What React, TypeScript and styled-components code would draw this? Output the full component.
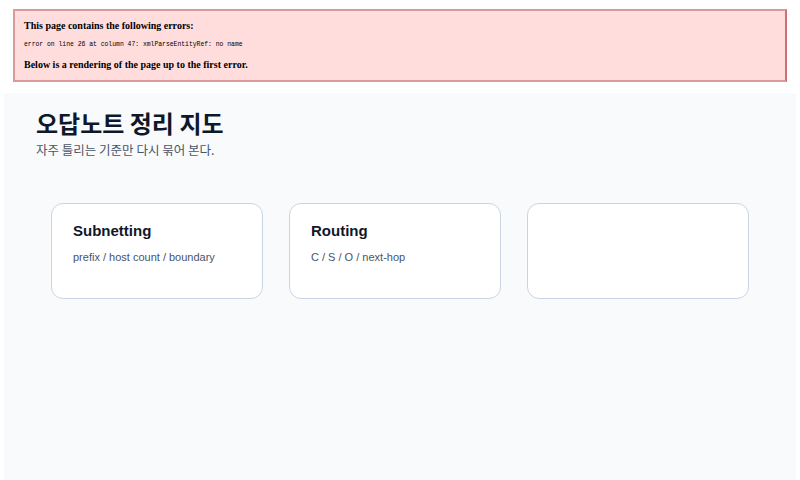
import React, { FC } from 'react';
import styled, { createGlobalStyle } from 'styled-components';

const GlobalStyle = createGlobalStyle`
  html, body {
    margin: 0;
    padding: 0;
    background: #ffffff;
  }
  body {
    width: 800px;
    height: 480px;
    overflow: hidden;
  }
`;

const Screen = styled.div`
  display: flex;
  flex-direction: column;
  height: 480px;
`;

const ParserError = styled.div`
  margin: 9px 13px 0 13px;
  padding: 0 9px;
  height: 73px;
  box-sizing: border-box;
  background: #ffdddd;
  border: 2px solid #d99a9a;
  border-right-color: #cc7070;
  color: #000;
  font-family: 'Liberation Serif', 'Times New Roman', serif;
`;

const ErrorHeading = styled.h3<{ $gap: number }>`
  margin: ${(p) => p.$gap}px 0 0 0;
  font-size: 10px;
  line-height: 12px;
  font-weight: bold;
`;

const ErrorDetail = styled.div`
  margin: 9px 0 0 0;
  font-family: 'Liberation Mono', 'Courier New', monospace;
  font-size: 6.4px;
  line-height: 8px;
`;

const Page = styled.main`
  flex: 1;
  margin: 11px 4px 0 4px;
  padding: 14px 32px 0 32px;
  background: #f8fafc;
  font-family: 'Liberation Sans', Arial, 'Noto Sans CJK KR', sans-serif;
`;

const Title = styled.h1`
  margin: 0;
  font-family: 'Noto Sans CJK KR', 'Noto Sans', sans-serif;
  font-size: 24px;
  line-height: 32px;
  font-weight: 700;
  color: #0f172a;
`;

const Subtitle = styled.p`
  margin: 2px 0 0 0;
  font-family: 'Noto Sans CJK KR', 'Noto Sans', sans-serif;
  font-size: 12.5px;
  line-height: 17px;
  color: #475569;
`;

const Grid = styled.section`
  display: grid;
  grid-template-columns: 212px 212px 222px;
  gap: 26px;
  margin: 45px 0 0 15px;
`;

const Card = styled.article`
  height: 96px;
  box-sizing: border-box;
  padding: 17px 21px;
  background: #ffffff;
  border: 1px solid #c9d5e2;
  border-radius: 12px;
`;

const CardTitle = styled.h2`
  margin: 0;
  font-size: 15px;
  line-height: 20px;
  font-weight: 700;
  color: #0f172a;
`;

const CardText = styled.p`
  margin: 9px 0 0 0;
  font-size: 11px;
  line-height: 15px;
  color: #475569;
`;

interface Topic {
  title?: string;
  summary?: string;
}

const topics: Topic[] = [
  { title: 'Subnetting', summary: 'prefix / host count / boundary' },
  { title: 'Routing', summary: 'C / S / O / next-hop' },
  {},
];

const TopicCard: FC<Topic> = ({ title, summary }) => (
  <Card>
    {title && <CardTitle>{title}</CardTitle>}
    {summary && <CardText>{summary}</CardText>}
  </Card>
);

const App: FC = () => (
  <Screen>
    <GlobalStyle />
    <ParserError>
      <ErrorHeading $gap={9}>This page contains the following errors:</ErrorHeading>
      <ErrorDetail>error on line 26 at column 47: xmlParseEntityRef: no name</ErrorDetail>
      <ErrorHeading $gap={10}>Below is a rendering of the page up to the first error.</ErrorHeading>
    </ParserError>
    <Page>
      <Title>오답노트 정리 지도</Title>
      <Subtitle>자주 틀리는 기준만 다시 묶어 본다.</Subtitle>
      <Grid>
        {topics.map((t, i) => (
          <TopicCard key={i} title={t.title} summary={t.summary} />
        ))}
      </Grid>
    </Page>
  </Screen>
);

export default App;
